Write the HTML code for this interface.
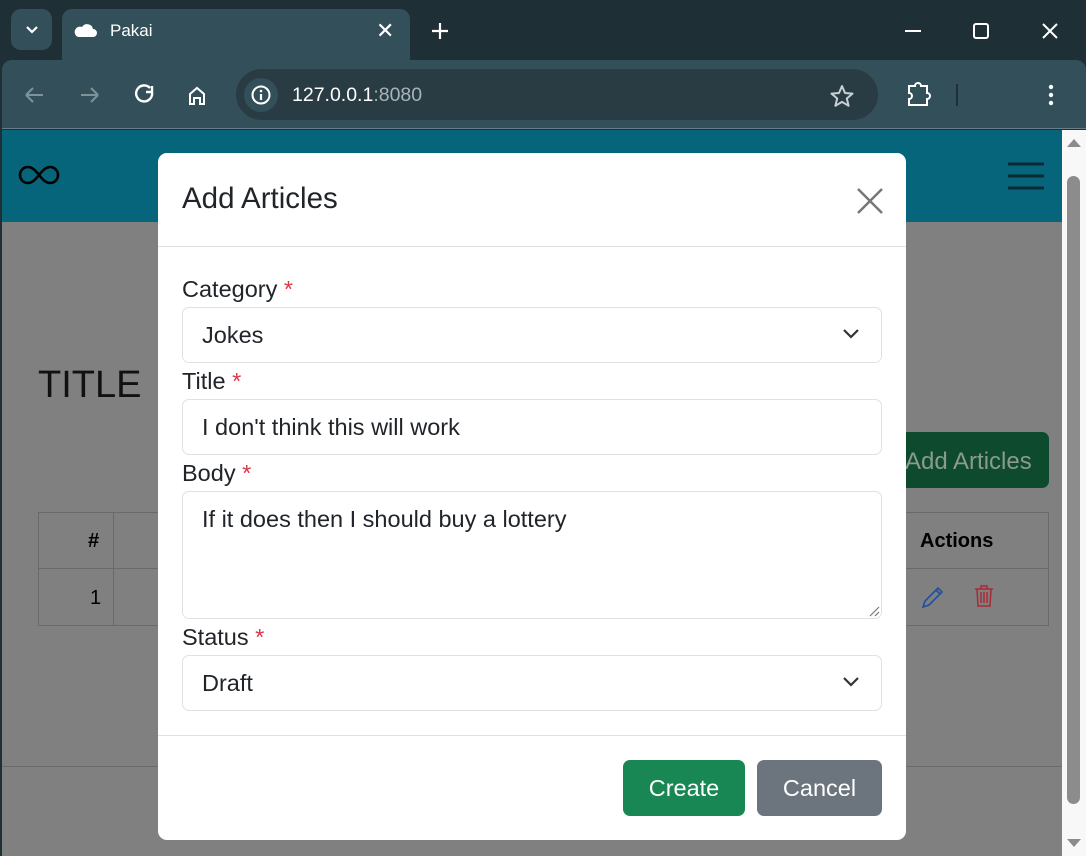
<!DOCTYPE html>
<html><head><meta charset="utf-8"><style>
*{box-sizing:border-box;margin:0;padding:0}
body{width:1086px;height:856px;overflow:hidden;background:#1f2f36;font-family:"Liberation Sans",Arial,sans-serif;position:relative}
.a{position:absolute}
.lbl{position:absolute;left:182px;font-size:23.5px;color:#212529}
.lbl span{color:#dc3545}
.inp{position:absolute;left:182px;width:700px;border:1px solid #dee2e6;border-radius:7px;background:#fff;font-size:23.5px;color:#212529;padding-left:19px}
</style></head><body>
<!-- tab strip -->
<div class="a" style="left:11px;top:9px;width:41px;height:41px;background:#334f5a;border-radius:10px"></div>
<svg class="a" style="left:24px;top:24px" width="16" height="12"><path d="M3 3l5 5 5-5" stroke="#fff" stroke-width="2.2" fill="none"/></svg>
<div class="a" style="left:62px;top:9px;width:348px;height:52px;background:#334f5a;border-radius:10px 10px 0 0"></div>
<svg class="a" style="left:73px;top:21px" width="26" height="18"><path d="M5 16h15a4 4 0 0 0 0-8 6 6 0 0 0-11-2 5 5 0 0 0-4 10z" fill="#fff"/></svg>
<div class="a" style="left:110px;top:21px;color:#fff;font-size:17px">Pakai</div>
<div class="a" style="left:376px;top:18px;color:#fff;font-size:22px">✕</div>
<svg class="a" style="left:430px;top:21px" width="20" height="20"><path d="M10 2v16M2 10h16" stroke="#fff" stroke-width="2.2"/></svg>
<svg class="a" style="left:900px;top:20px" width="170" height="22"><path d="M5 11h16" stroke="#fff" stroke-width="2"/><rect x="74" y="4" width="14" height="14" rx="2" stroke="#fff" stroke-width="2" fill="none"/><path d="M143 4l14 14M157 4l-14 14" stroke="#fff" stroke-width="2"/></svg>
<!-- toolbar -->
<div class="a" style="left:2px;top:60px;width:1084px;height:69px;background:#334f5a;border-radius:10px 10px 0 0;border-bottom:1px solid #6b7d84"></div>
<svg class="a" style="left:22px;top:83px" width="200" height="24"><path d="M4 12h17M4 12l7-7M4 12l7 7" stroke="#7f9299" stroke-width="2" fill="none"/><path d="M59 12h17M76 12l-7-7M76 12l-7 7" stroke="#7f9299" stroke-width="2" fill="none"/><path d="M128 5a8 8 0 1 0 2 4M130 3v6h-6" stroke="#fff" stroke-width="2.4" fill="none"/><path d="M168 21V11l7-6 7 6v10h-4v-6h-6v6z" stroke="#fff" stroke-width="2" fill="none"/></svg>
<div class="a" style="left:236px;top:69px;width:642px;height:51px;background:#293c44;border-radius:26px"></div>
<div class="a" style="left:244px;top:78px;width:34px;height:34px;background:#334f5a;border-radius:17px"></div>
<svg class="a" style="left:251px;top:85px" width="20" height="20"><circle cx="10" cy="10" r="8.5" stroke="#fff" stroke-width="2" fill="none"/><path d="M10 9v6" stroke="#fff" stroke-width="2.2"/><circle cx="10" cy="6" r="1.3" fill="#fff"/></svg>
<div class="a" style="left:292px;top:84px;font-size:19.5px;color:#fff">127.0.0.1<span style="color:#a7b4b9">:8080</span></div>
<svg class="a" style="left:830px;top:84px" width="24" height="23"><path d="M12 2l3 7 7.5.6-5.7 4.9 1.8 7.3L12 17.9l-6.6 3.9 1.8-7.3L1.5 9.6 9 9z" stroke="#c8d0d3" stroke-width="2" fill="none" stroke-linejoin="round"/></svg>
<svg class="a" style="left:905px;top:81px" width="30" height="28"><path d="M4 5h6a3 3 0 0 1 6 0h6v7a3 3 0 0 1 0 6v6H4v-6a3 3 0 0 0 0-6z" stroke="#fff" stroke-width="2" fill="none"/></svg>
<div class="a" style="left:956px;top:84px;width:2px;height:22px;background:#1f2f36"></div>
<svg class="a" style="left:1044px;top:83px" width="14" height="24"><circle cx="7" cy="4" r="2.2" fill="#fff"/><circle cx="7" cy="12" r="2.2" fill="#fff"/><circle cx="7" cy="20" r="2.2" fill="#fff"/></svg>
<!-- page -->
<div class="a" style="left:2px;top:130px;width:1060px;height:726px;background:#808080"></div>
<div class="a" style="left:2px;top:130px;width:1060px;height:92px;background:#06657a"></div>
<svg class="a" style="left:18px;top:164px" width="42" height="22"><path d="M21 11c-4-5-7-8-11-8a8 8 0 0 0 0 16c4 0 7-3 11-8s7-8 11-8a8 8 0 0 1 0 16c-4 0-7-3-11-8z" stroke="#000" stroke-width="2.6" fill="none"/></svg>
<svg class="a" style="left:1006px;top:162px" width="40" height="30"><path d="M2 2h36M2 14h36M2 26h36" stroke="#0b2a33" stroke-width="3"/></svg>
<div class="a" style="left:38px;top:364px;font-size:38px;color:#111">TITLE</div>
<div class="a" style="left:880px;top:432px;width:169px;height:56px;background:#0e4a2e;border-radius:7px;color:#8a9a90;font-size:24px;padding:16px 0 0 25px">Add Articles</div>
<div class="a" style="left:38px;top:512px;width:1011px;height:114px;border:1px solid #6a6a6a"></div>
<div class="a" style="left:38px;top:568px;width:1011px;height:1px;background:#6a6a6a"></div>
<div class="a" style="left:113px;top:512px;width:1px;height:114px;background:#6a6a6a"></div>
<div class="a" style="left:88px;top:530px;font-size:20px;font-weight:bold;color:#000">#</div>
<div class="a" style="left:90px;top:587px;font-size:20px;color:#000">1</div>
<div class="a" style="left:920px;top:530px;font-size:20px;font-weight:bold;color:#000">Actions</div>
<svg class="a" style="left:920px;top:584px" width="26" height="26"><path d="M3 23l2-6L18 4l4 4L9 21z M16 6l4 4" stroke="#1f4fa0" stroke-width="1.6" fill="none"/></svg>
<svg class="a" style="left:973px;top:584px" width="22" height="24"><path d="M2 5h18M8 5V2h6v3M4 5l1 17h12l1-17M8 8v11M11 8v11M14 8v11" stroke="#a72a35" stroke-width="1.5" fill="none"/></svg>
<div class="a" style="left:2px;top:766px;width:1060px;height:1px;background:#6a6a6a"></div>
<!-- scrollbar -->
<div class="a" style="left:1062px;top:130px;width:24px;height:726px;background:#f8f8f8"></div>
<div class="a" style="left:1067px;top:176px;width:13px;height:628px;background:#8c8c8c;border-radius:7px"></div>
<svg class="a" style="left:1064px;top:136px" width="20" height="716"><path d="M3 11l7-8 7 8z" fill="#8c8c8c"/><path d="M3 703l7 8 7-8z" fill="#8c8c8c"/></svg>
<!-- modal -->
<div class="a" style="left:158px;top:153px;width:748px;height:687px;background:#fff;border-radius:9px"></div>
<div class="a" style="left:182px;top:182px;font-size:29.5px;color:#212529">Add Articles</div>
<svg class="a" style="left:856px;top:187px" width="28" height="28"><path d="M2 2l24 24M26 2L2 26" stroke="#777" stroke-width="2.5"/></svg>
<div class="a" style="left:158px;top:246px;width:748px;height:1px;background:#dee2e6"></div>
<div class="lbl" style="top:276px">Category <span>*</span></div>
<div class="inp" style="top:307px;height:56px;line-height:54px">Jokes</div>
<svg class="a" style="left:842px;top:327px" width="18" height="14"><path d="M2 3l7 7 7-7" stroke="#333" stroke-width="2.2" fill="none"/></svg>
<div class="lbl" style="top:368px">Title <span>*</span></div>
<div class="inp" style="top:399px;height:56px;line-height:54px">I don't think this will work</div>
<div class="lbl" style="top:460px">Body <span>*</span></div>
<div class="inp" style="top:491px;height:128px;padding-top:14px">If it does then I should buy a lottery</div>
<svg class="a" style="left:868px;top:605px" width="12" height="12"><path d="M11 2L2 11M11 7L7 11" stroke="#777" stroke-width="1.2"/></svg>
<div class="lbl" style="top:624px">Status <span>*</span></div>
<div class="inp" style="top:655px;height:56px;line-height:54px">Draft</div>
<svg class="a" style="left:842px;top:675px" width="18" height="14"><path d="M2 3l7 7 7-7" stroke="#333" stroke-width="2.2" fill="none"/></svg>
<div class="a" style="left:158px;top:735px;width:748px;height:1px;background:#dee2e6"></div>
<div class="a" style="left:623px;top:760px;width:122px;height:56px;background:#198754;border-radius:7px;color:#fff;font-size:23.5px;text-align:center;line-height:56px">Create</div>
<div class="a" style="left:757px;top:760px;width:125px;height:56px;background:#6c757d;border-radius:7px;color:#fff;font-size:23.5px;text-align:center;line-height:56px">Cancel</div>
</body></html>
